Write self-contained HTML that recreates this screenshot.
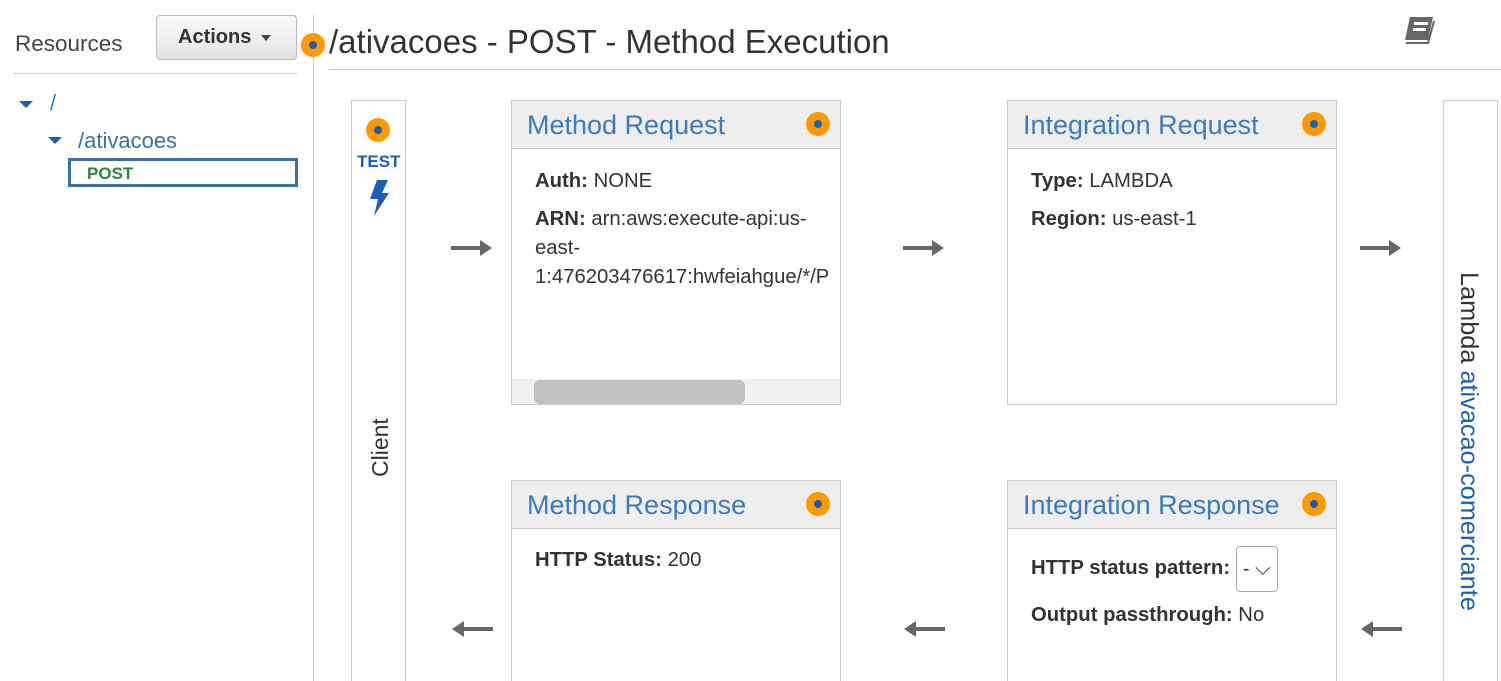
<!DOCTYPE html><html><head><style>
html,body{margin:0;width:1501px;height:681px;overflow:hidden}
body{background:#fff;font-family:"Liberation Sans",Arial,sans-serif;color:#333;position:relative}
.a{position:absolute}
.box{position:absolute;border:1px solid #ccc;background:#fff;box-sizing:border-box;overflow:hidden}
.hd{height:48px;background:#eee;border-bottom:1px solid #ccc;font-size:27px;color:#3b7bbf;padding:9px 0 0 15px;box-sizing:border-box;position:relative}
.dot{position:absolute;width:24px;height:24px;border-radius:50%;background:#f90}
.dot:after{content:"";position:absolute;left:8px;top:8px;width:8px;height:8px;border-radius:50%;background:#1a5fb4}
.hd .dot{right:10px;top:11px}
.bd{padding:0 0 0 23px;font-size:20.3px;line-height:38px}
.bd b{font-weight:bold}
.arr{position:absolute;height:4px;width:30px;background:#666}
.arr.r:after{content:"";position:absolute;right:-11px;top:-6px;border-left:12px solid #666;border-top:8px solid transparent;border-bottom:8px solid transparent}
.arr.l:before{content:"";position:absolute;left:-11px;top:-6px;border-right:12px solid #666;border-top:8px solid transparent;border-bottom:8px solid transparent}
.tri{position:absolute;border-top:7px solid #1a5fb4;border-left:7px solid transparent;border-right:7px solid transparent}
</style></head><body>
<div class="a" style="left:15px;top:31px;font-size:22.5px;color:#444">Resources</div>
<div class="a" style="left:156px;top:15px;width:141px;height:45px;border:1px solid #bbb;border-radius:4px;background:linear-gradient(#fafafa,#e4e4e4);box-sizing:border-box;font-weight:bold;font-size:20px;color:#333;padding:10px 0 0 21px">Actions <span style="display:inline-block;border-top:6px solid #444;border-left:5px solid transparent;border-right:5px solid transparent;vertical-align:middle;margin-left:4px"></span></div>
<div class="a" style="left:14px;top:73px;width:283px;height:1px;background:#ccc"></div>
<div class="a" style="left:313px;top:15px;width:1px;height:666px;background:#ccc"></div>
<div class="tri" style="left:19px;top:101px"></div>
<div class="a" style="left:50px;top:90px;font-size:22px;color:#3b7bbf">/</div>
<div class="tri" style="left:48px;top:137px"></div>
<div class="a" style="left:78px;top:128px;font-size:22px;color:#3b6fa8">/ativacoes</div>
<div class="a" style="left:68px;top:158px;width:230px;height:29px;border:3px solid #3b6fa8;box-sizing:border-box;font-weight:bold;font-size:17px;color:#2e8540;padding:3px 0 0 16px">POST</div>
<div class="dot" style="left:301px;top:33px"></div>
<div class="a" style="left:329px;top:23px;font-size:33px;color:#333">/ativacoes - POST - Method Execution</div>
<svg class="a" style="left:1402px;top:16px" width="34" height="30" viewBox="0 0 34 30"><path d="M8 1h23l-5 23H3z" fill="#666"/><path d="M4 27h22l6-22" fill="none" stroke="#666" stroke-width="2"/><rect x="12" y="6" width="14" height="3" fill="#fff"/><rect x="11" y="12" width="13" height="3" fill="#fff"/></svg>
<div class="a" style="left:329px;top:69px;width:1172px;height:1px;background:#ccc"></div>
<div class="box" style="left:351px;top:100px;width:55px;height:600px"></div>
<div class="dot" style="left:366px;top:118px"></div>
<div class="a" style="left:357px;top:152px;font-size:17px;font-weight:bold;color:#1a5fb4">TEST</div>
<svg class="a" style="left:368px;top:180px" width="22" height="36" viewBox="0 0 22 36"><path d="M9 0h11l-6 13h7L6 36l4-17H2z" fill="#1a5fb4"/></svg>
<div class="a" style="left:367px;top:477px;font-size:23px;transform:rotate(-90deg);transform-origin:0 0">Client</div>
<div class="box" style="left:1443px;top:100px;width:55px;height:600px"></div>
<div class="a" style="left:1483px;top:272px;font-size:25.3px;transform:rotate(90deg);transform-origin:0 0;white-space:nowrap">Lambda <span style="color:#1a5fb4">ativacao-comerciante</span></div>
<div class="box" style="left:511px;top:100px;width:330px;height:305px"><div class="hd">Method Request<div class="dot"></div></div><div class="bd" style="padding-top:13px;white-space:nowrap"><b>Auth:</b> NONE<br><b>ARN:</b> arn:aws:execute-api:us-<br><span style="line-height:29px;position:relative;top:-4px;display:inline-block">east-<br>1:476203476617:hwfeiahgue/*/P</span></div>
<div class="a" style="left:0;top:278px;width:328px;height:25px;background:#f0f0f0"><div style="margin:1px 0 0 22px;width:211px;height:24px;background:#c1c1c1;border-radius:6px"></div></div></div>
<div class="box" style="left:1007px;top:100px;width:330px;height:305px"><div class="hd">Integration Request<div class="dot"></div></div><div class="bd" style="padding-top:13px"><b>Type:</b> LAMBDA<br><b>Region:</b> us-east-1</div></div>
<div class="box" style="left:511px;top:480px;width:330px;height:220px"><div class="hd">Method Response<div class="dot"></div></div><div class="bd" style="padding-top:12px"><b>HTTP Status:</b> 200</div></div>
<div class="box" style="left:1007px;top:480px;width:330px;height:220px"><div class="hd">Integration Response<div class="dot"></div></div><div class="bd" style="padding-top:16px;line-height:46px"><b>HTTP status pattern:</b> <span style="display:inline-block;width:42px;height:46px;border:1px solid #aaa;border-radius:4px;vertical-align:middle;box-sizing:border-box;padding-left:6px;line-height:44px">- ⌵</span><br><b>Output passthrough:</b> No</div></div>
<div class="arr r" style="left:451px;top:246px"></div>
<div class="arr r" style="left:903px;top:246px"></div>
<div class="arr r" style="left:1360px;top:246px"></div>
<div class="arr l" style="left:463px;top:627px"></div>
<div class="arr l" style="left:915px;top:627px"></div>
<div class="arr l" style="left:1372px;top:627px"></div>
</body></html>
